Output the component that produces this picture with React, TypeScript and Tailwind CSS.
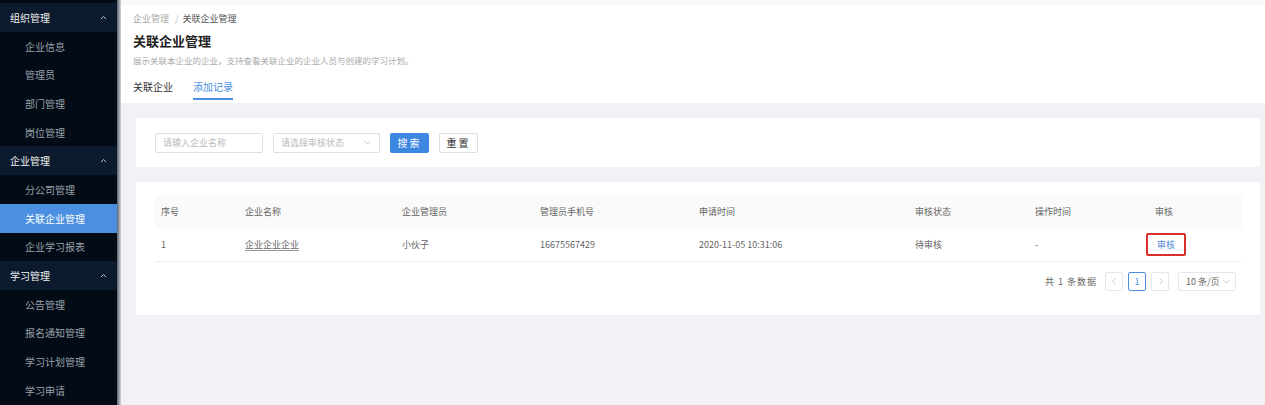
import React from "react";

const font = { fontFamily: '"Noto Sans CJK SC", "Noto Sans", sans-serif' };

type Item = { label: string; header?: boolean; active?: boolean };
const menu: Item[] = [
  { label: "组织管理", header: true },
  { label: "企业信息" },
  { label: "管理员" },
  { label: "部门管理" },
  { label: "岗位管理" },
  { label: "企业管理", header: true },
  { label: "分公司管理" },
  { label: "关联企业管理", active: true },
  { label: "企业学习报表" },
  { label: "学习管理", header: true },
  { label: "公告管理" },
  { label: "报名通知管理" },
  { label: "学习计划管理" },
  { label: "学习申请" },
];

const Caret = () => (
  <svg width="7" height="5" viewBox="0 0 7 5" className="text-gray-300">
    <path d="M1 4 L3.5 1.5 L6 4" fill="none" stroke="currentColor" strokeWidth="0.9" />
  </svg>
);

const Chevron = ({ dir = "down" }: { dir?: "down" | "left" | "right" }) => {
  const d =
    dir === "down" ? "M1.5 3 L4.5 6 L7.5 3" : dir === "left" ? "M5.5 1.5 L2.5 4.5 L5.5 7.5" : "M3.5 1.5 L6.5 4.5 L3.5 7.5";
  return (
    <svg width="9" height="9" viewBox="0 0 9 9">
      <path d={d} fill="none" stroke="#c0c4cc" strokeWidth="0.9" />
    </svg>
  );
};

const cols = ["序号", "企业名称", "企业管理员", "管理员手机号", "申请时间", "审核状态", "操作时间", "审核"];

export default function App() {
  return (
    <div className="flex w-[1265px] h-[405px] overflow-hidden bg-[#f0f2f5]" style={font}>
      {/* sidebar */}
      <div className="w-[117px] shrink-0 bg-[#020b16] pt-[3px] flex flex-col">
        {menu.map((m) =>
          m.header ? (
            <div key={m.label} className="h-[28.7px] shrink-0 bg-[#0b1a2c] flex items-center justify-between pl-[10px] pr-[10px] text-[10px] text-[#f2f2f2]">
              <span>{m.label}</span>
              <Caret />
            </div>
          ) : (
            <div
              key={m.label}
              className={`h-[28.7px] shrink-0 flex items-center pl-[25px] text-[10px] ${
                m.active ? "bg-[#4a8fe0] text-white" : "text-[#9aa1a9]"
              }`}
            >
              {m.label}
            </div>
          )
        )}
      </div>
      <div className="w-[4px] shrink-0 bg-gradient-to-r from-[#5b6370] to-[#d5d8dd]" />
      {/* main */}
      <div className="flex-1 flex flex-col min-w-0">
        <div className="bg-white h-[103px] shrink-0 pl-[12px] pt-[8px] border-t-[5px] border-[#f7f8fa] flex flex-col">
          <div className="text-[9px] leading-[12px] text-[#aaa]">
            企业管理 <span className="mx-[4px] text-[#bbb]">/</span>
            <span className="text-[#555]">关联企业管理</span>
          </div>
          <div className="text-[13px] font-bold text-[#222] leading-[18px] mt-[7px]">关联企业管理</div>
          <div className="text-[8.5px] text-[#aaa] leading-[12px] mt-[4px]">
            展示关联本企业的企业，支持查看关联企业的企业人员与创建的学习计划。
          </div>
          <div className="flex gap-[20px] mt-[14px] text-[10px] leading-[14px]">
            <div className="text-[#333]">关联企业</div>
            <div className="text-[#4a8fe0] flex flex-col items-center">
              <span>添加记录</span>
              <div className="h-[2px] w-[40px] bg-[#4a8fe0] mt-[4px]" />
            </div>
          </div>
        </div>
        <div className="px-[15px] pt-[15px] pr-[5px] flex flex-col gap-[15px]">
          {/* filter card */}
          <div className="bg-white h-[49px] flex items-center pl-[19px] gap-[10px]">
            <div className="w-[108px] h-[20px] border border-[#dcdfe6] rounded-[2px] flex items-center px-[7px] text-[9px] text-[#bbb]">
              请输入企业名称
            </div>
            <div className="w-[107px] h-[20px] border border-[#dcdfe6] rounded-[2px] flex items-center justify-between px-[7px] text-[9px] text-[#bbb]">
              <span>请选择审核状态</span>
              <Chevron />
            </div>
            <div className="w-[39px] h-[20px] rounded-[2px] bg-[#3d87e0] text-white text-[10px] flex items-center justify-center tracking-[2px]">
              搜索
            </div>
            <div className="w-[39px] h-[20px] rounded-[2px] border border-[#dcdfe6] bg-white text-[#333] text-[10px] flex items-center justify-center tracking-[2px]">
              重置
            </div>
          </div>
          {/* table card */}
          <div className="bg-white h-[133px] pl-[19px] pr-[18px] pt-[14px]">
            <div className="grid grid-cols-[84px_157px_138px_159px_216px_120px_120px_1fr] text-[9px]">
              {cols.map((c) => (
                <div key={c} className="h-[32px] bg-[#fafafa] flex items-center pl-[6px] text-[#666]">
                  {c}
                </div>
              ))}
              {["1", "企业企业企业", "小伙子", "16675567429", "2020-11-05 10:31:06", "待审核", "-"].map((v, i) => (
                <div key={i} className="h-[34px] border-b border-[#eeeeee] flex items-center pl-[6px] text-[#666]">
                  <span className={i === 1 ? "underline decoration-[#999] underline-offset-2" : ""}>{v}</span>
                </div>
              ))}
              <div className="h-[34px] border-b border-[#eeeeee] flex items-center">
                <div className="ml-[-3px] w-[40px] h-[23px] border-2 border-[#d9302b] rounded-[2px] flex items-center justify-center text-[9px] text-[#4f86d8]">
                  审核
                </div>
              </div>
            </div>
            <div className="flex justify-end items-center mt-[10px] pr-[6px] gap-[5px] text-[9px] text-[#666]">
              <span className="mr-[3px] tracking-[1px]">共 1 条数据</span>
              <div className="w-[18px] h-[19px] border border-[#e4e7ed] rounded-[2px] flex items-center justify-center">
                <Chevron dir="left" />
              </div>
              <div className="w-[18px] h-[19px] border border-[#4a8fe0] rounded-[2px] flex items-center justify-center text-[#4a8fe0]">
                1
              </div>
              <div className="w-[18px] h-[19px] border border-[#e4e7ed] rounded-[2px] flex items-center justify-center">
                <Chevron dir="right" />
              </div>
              <div className="ml-[4px] w-[58px] h-[19px] border border-[#e4e7ed] rounded-[2px] flex items-center justify-between pl-[7px] pr-[4px]">
                <span>10 条/页</span>
                <Chevron />
              </div>
            </div>
          </div>
        </div>
      </div>
    </div>
  );
}
